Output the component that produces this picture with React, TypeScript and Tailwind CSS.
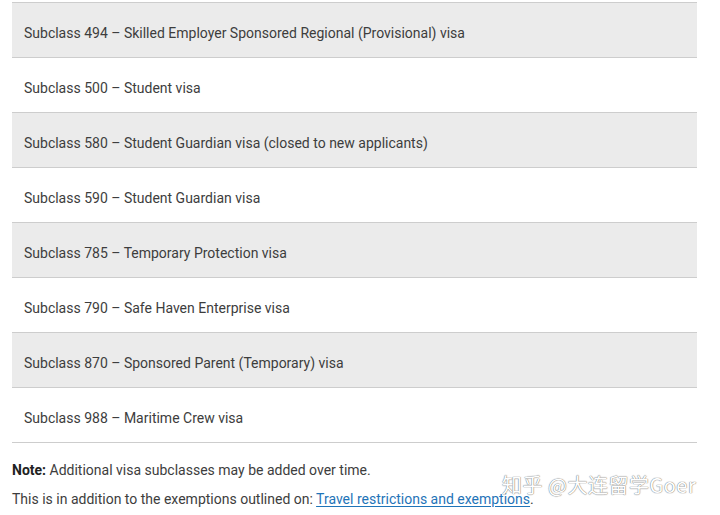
const rows = [
  "Subclass 494 – Skilled Employer Sponsored Regional (Provisional) visa",
  "Subclass 500 – Student visa",
  "Subclass 580 – Student Guardian visa (closed to new applicants)",
  "Subclass 590 – Student Guardian visa",
  "Subclass 785 – Temporary Protection visa",
  "Subclass 790 – Safe Haven Enterprise visa",
  "Subclass 870 – Sponsored Parent (Temporary) visa",
  "Subclass 988 – Maritime Crew visa",
];

export default function App() {
  return (
    <div className="relative w-[720px] h-[515px] bg-white overflow-hidden font-['Roboto',sans-serif] text-[#3d3d3d]">
      <div className="pt-[2px] pl-[12px] w-[697px]">
        <div className="border-t border-[#cdcdcd]">
          {rows.map((r, i) => (
            <div
              key={r}
              className={`h-[55px] flex items-center pl-[12px] pt-[7px] text-[14px] border-b border-[#cdcdcd] ${
                i % 2 === 0 ? "bg-[#ebebeb]" : "bg-white"
              }`}
            >
              {r}
            </div>
          ))}
        </div>
        <p className="mt-[17px] text-[14px] leading-[20px]">
          <span className="font-bold text-[#222]">Note:</span> Additional visa
          subclasses may be added over time.
        </p>
        <p className="mt-[9px] text-[14px] leading-[20px]">
          This is in addition to the exemptions outlined on:{" "}
          <a className="text-[#1f74b8] underline underline-offset-2">
            Travel restrictions and exemptions
          </a>
          .
        </p>
      </div>
      <div className="absolute left-[502px] top-[472px] text-[20px] leading-[26px] text-white tracking-[0.5px] font-['Noto_Sans_CJK_SC',sans-serif] [text-shadow:0_0_1px_#777,0_0_1px_#777]">
        知乎 @大连留学Goer
      </div>
    </div>
  );
}
